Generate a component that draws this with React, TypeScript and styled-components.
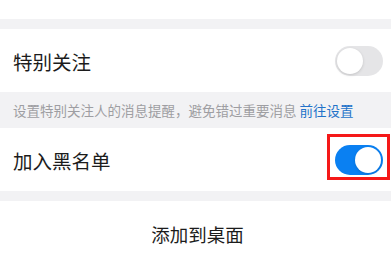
import styled, { createGlobalStyle } from 'styled-components';

const GlobalStyle = createGlobalStyle`
  html, body {
    margin: 0;
    padding: 0;
    background: #f2f2f4;
  }
  body {
    font-family: "Noto Sans CJK SC", "Noto Sans", sans-serif;
  }
`;

/** 设置页面 */
export default function App() {
  return (
    <>
      <GlobalStyle />
      <Page>
        <TopBlock />
        <Gap />
        <Row>
          <Label>特别关注</Label>
          <Switch on={false} />
        </Row>
        <Note>
          设置特别关注人的消息提醒，避免错过重要消息 <Link>前往设置</Link>
        </Note>
        <Row>
          <Label>加入黑名单</Label>
          <Switch on />
          <Highlight />
        </Row>
        <Gap />
        <Action>添加到桌面</Action>
      </Page>
    </>
  );
}

const Switch = ({ on }: { on: boolean }) => (
  <Track on={on}>
    <Knob on={on} />
  </Track>
);

const Page = styled.div`
  display: flex;
  flex-direction: column;
  width: 391px;
`;

const TopBlock = styled.div`
  height: 19px;
  background: #ffffff;
`;

const Gap = styled.div`
  height: 10px;
  background: #f2f2f4;
`;

const Row = styled.div`
  position: relative;
  display: flex;
  align-items: center;
  justify-content: space-between;
  height: 63px;
  padding: 0 8px 0 13px;
  background: #ffffff;
`;

const Label = styled.span`
  font-size: 19.5px;
  color: #1c1c1c;
  padding-top: 1px;
`;

const Track = styled.div<{ on: boolean }>`
  display: flex;
  align-items: center;
  justify-content: ${(p) => (p.on ? 'flex-end' : 'flex-start')};
  box-sizing: border-box;
  width: 48px;
  height: 30px;
  padding: 2px;
  border-radius: 15px;
  background: ${(p) => (p.on ? '#0a80f2' : '#e5e5e7')};
`;

const Knob = styled.div<{ on: boolean }>`
  width: 26px;
  height: 26px;
  border-radius: 50%;
  background: #ffffff;
  box-shadow: 0 1px 3px rgba(0, 0, 0, 0.15);
`;

const Highlight = styled.div`
  position: absolute;
  left: 327px;
  top: 6px;
  width: 63px;
  height: 46px;
  box-sizing: border-box;
  border: 3px solid #f51818;
  pointer-events: none;
`;

const Note = styled.div`
  display: flex;
  align-items: center;
  height: 36px;
  padding-left: 13px;
  font-size: 13.5px;
  color: #9e9ea2;
  white-space: pre;
`;

const Link = styled.span`
  color: #2272c9;
`;

const Action = styled.div`
  display: flex;
  justify-content: center;
  align-items: center;
  height: 66px;
  padding-left: 4px;
  font-size: 18.5px;
  color: #1c1c1c;
  background: #ffffff;
`;
